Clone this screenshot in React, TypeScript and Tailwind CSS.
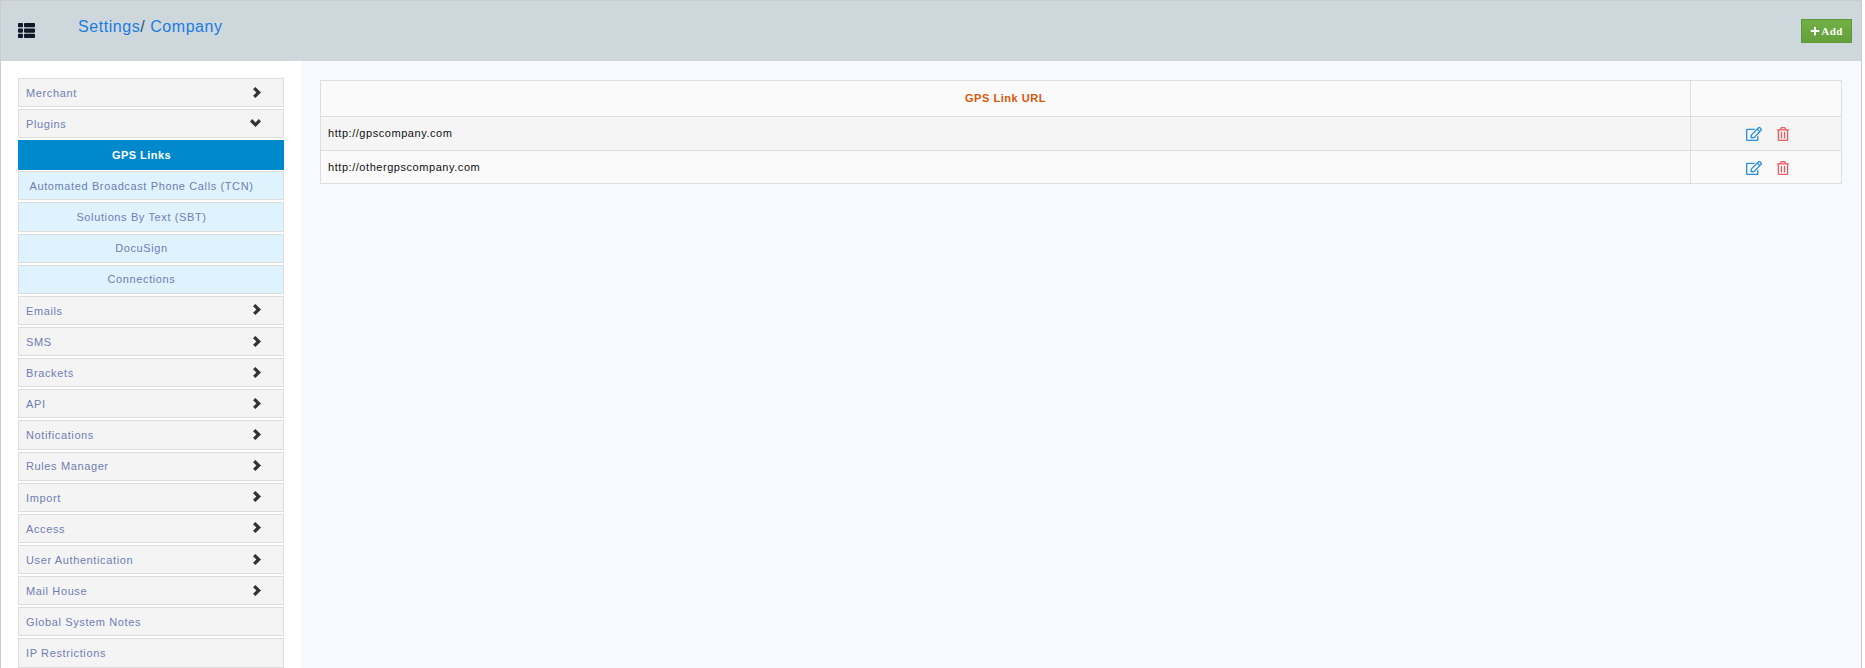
import { FaPlus, FaRegEdit, FaRegTrashAlt, FaThList } from "react-icons/fa";

const topItems = [
  { label: "Merchant", arrow: "right" },
  { label: "Plugins", arrow: "down" },
];

const pluginLinks = [
  "Automated Broadcast Phone Calls (TCN)",
  "Solutions By Text (SBT)",
  "DocuSign",
  "Connections",
];

const bottomItems = [
  { label: "Emails", arrow: "right" },
  { label: "SMS", arrow: "right" },
  { label: "Brackets", arrow: "right" },
  { label: "API", arrow: "right" },
  { label: "Notifications", arrow: "right" },
  { label: "Rules Manager", arrow: "right" },
  { label: "Import", arrow: "right" },
  { label: "Access", arrow: "right" },
  { label: "User Authentication", arrow: "right" },
  { label: "Mail House", arrow: "right" },
  { label: "Global System Notes", arrow: "" },
  { label: "IP Restrictions", arrow: "" },
];

const links = ["http://gpscompany.com", "http://othergpscompany.com"];

function MenuItem({ label, arrow }: { label: string; arrow: string }) {
  return (
    <div className="h-[29.15px] mb-[2px] shrink-0 flex items-center justify-between pl-[7px] pr-[22px] bg-[#f4f4f4] border border-[#dddddd] text-[11px] tracking-[0.62px] text-[#6f7db5]">
      <span className="pt-px">{label}</span>
      {arrow === "right" && (
        <svg width="8" height="11" viewBox="0 0 8 11" className="-mt-px fill-[#333333]">
          <path d="M2.4 0L8 5.5L2.4 11L0 8.8L3.4 5.5L0 2.2Z" />
        </svg>
      )}
      {arrow === "down" && (
        <svg width="11" height="8" viewBox="0 0 11 8" className="-mt-px fill-[#333333]">
          <path d="M0 2.4L5.5 8L11 2.4L8.8 0L5.5 3.4L2.2 0Z" />
        </svg>
      )}
    </div>
  );
}

export default function App() {
  return (
    <div className="h-[668px] overflow-hidden bg-white font-['Liberation_Sans',Arial,sans-serif]">
      <div className="h-full mr-[3px] flex flex-col border-l border-t border-r border-[#cccccc] bg-white">
        {/* top bar */}
        <div className="h-[60px] shrink-0 flex items-start justify-between bg-[#cdd7dc]">
          <div className="flex items-start">
            <FaThList className="ml-[17px] mt-[21px] text-[17px] text-[#111827]" />
            <div className="ml-[43px] mt-[15px] text-[16px] leading-[22px] tracking-[0.55px] text-[#1a7ce0]">
              Settings<span className="text-[#1f4f80]">/</span> Company
            </div>
          </div>
          <button className="mt-[18px] mr-[9px] w-[51px] h-[24px] flex items-center justify-center gap-px border border-[#5b9a37] bg-gradient-to-b from-[#72b044] to-[#649f3b] text-white text-[11px] font-bold font-['Liberation_Serif',serif] tracking-[0.4px]">
            <FaPlus className="text-[10px]" />
            Add
          </button>
        </div>

        <div className="flex flex-1 min-h-0">
          {/* left menu */}
          <div className="w-[300px] shrink-0 pt-[17px] pl-[17px] pr-[17px] flex flex-col bg-white">
            {topItems.map((item) => (
              <MenuItem key={item.label} label={item.label} arrow={item.arrow} />
            ))}
            <div className="h-[30px] mb-px shrink-0 flex items-center justify-center pr-[19px] bg-[#0088cc] text-white text-[11px] font-bold tracking-[0.45px]">
              GPS Links
            </div>
            {pluginLinks.map((name) => (
              <div
                key={name}
                className="h-[29.15px] mb-[2px] shrink-0 flex items-center justify-center pr-[19px] bg-[#def3fd] border border-[#dddddd] text-[11px] tracking-[0.62px] text-[#6f7db5]"
              >
                {name}
              </div>
            ))}
            {bottomItems.map((item) => (
              <MenuItem key={item.label} label={item.label} arrow={item.arrow} />
            ))}
          </div>

          {/* content */}
          <div className="flex-1 pt-[19px] pl-[19px] pr-[19px] bg-[#f8f9fe]">
            <table className="w-full border-collapse bg-[#fafafa] text-[11px] tracking-[0.55px]">
              <thead>
                <tr className="h-[36px]">
                  <th className="border border-[#dddddd] text-[#d9580f] font-bold text-center">GPS Link URL</th>
                  <th className="w-[151px] border border-[#dddddd]"></th>
                </tr>
              </thead>
              <tbody>
                {links.map((url, i) => (
                  <tr key={url} className={i === 0 ? "h-[34px] bg-[#f5f5f5]" : "h-[33px]"}>
                    <td className="border border-[#dddddd] px-[7px] text-[#111111]">{url}</td>
                    <td className="border border-[#dddddd]">
                      <div className={i === 0 ? "flex items-center justify-center gap-[14px] pl-1" : "flex items-center justify-center gap-[14px] pl-1 pt-px"}>
                        <FaRegEdit className="text-[16px] text-[#2b8fdb]" />
                        <FaRegTrashAlt className="text-[14px] text-[#ea5a60]" />
                      </div>
                    </td>
                  </tr>
                ))}
              </tbody>
            </table>
          </div>
        </div>
      </div>
    </div>
  );
}
